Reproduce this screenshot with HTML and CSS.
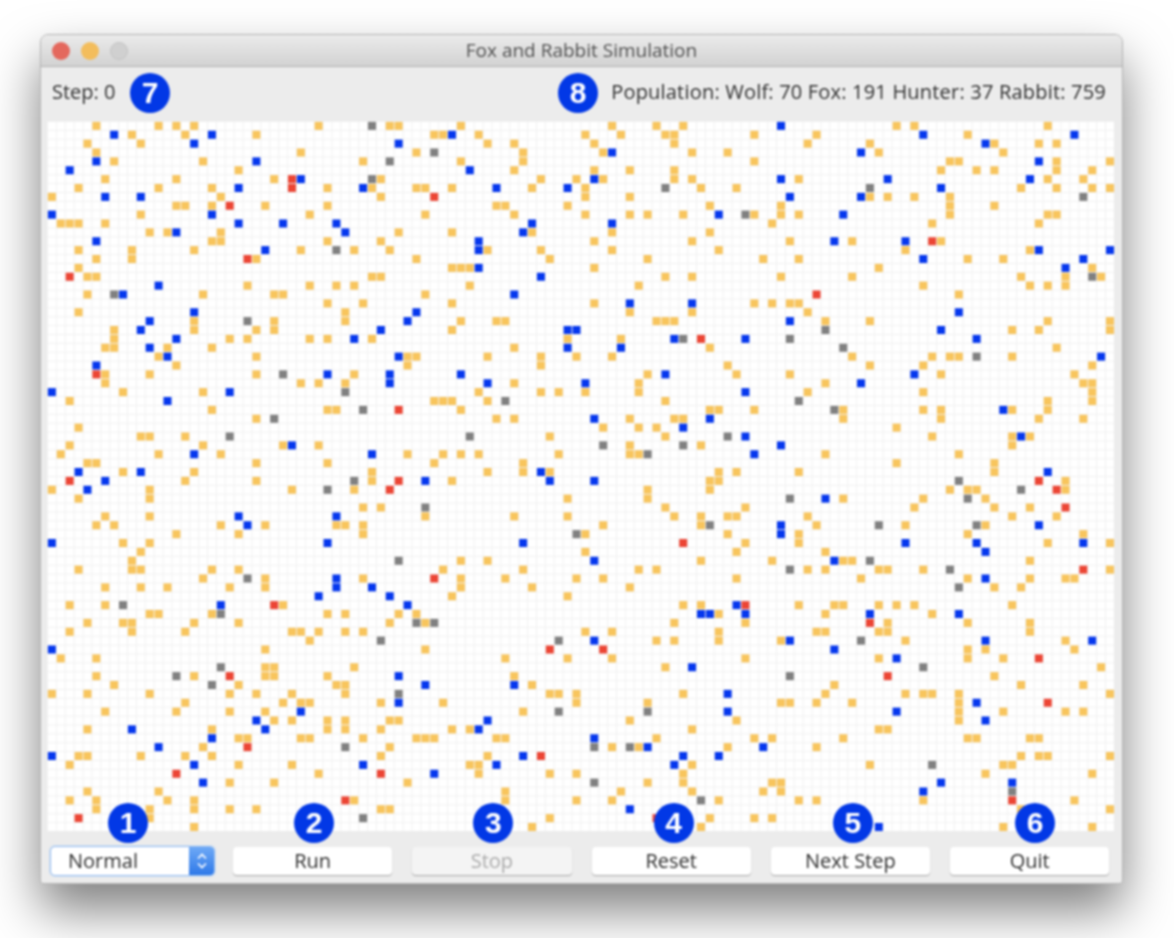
FILE: index.html
```html
<!DOCTYPE html>
<html lang="en">
<head>
    <meta charset="UTF-8">
    <title>Fox and Rabbit Simulation</title>
    <link rel="stylesheet" href="styles.css">
</head>
<body>
    <div class="window">
        <div class="titlebar">
            <span class="light red"></span>
            <span class="light yellow"></span>
            <span class="light off"></span>
            <span class="title">Fox and Rabbit Simulation</span>
        </div>
        <div class="info">
            <div class="info-left">
                <span class="step">Step: 0</span>
                <span class="badge">7</span>
            </div>
            <div class="info-right">
                <span class="badge">8</span>
                <span class="population">Population: Wolf: 70 Fox: 191 Hunter: 37 Rabbit: 759</span>
            </div>
        </div>
        <svg class="field" id="field" viewBox="0 0 120 80" preserveAspectRatio="none"></svg>
        <div class="controls">
            <div class="ctrl ctrl-select">
                <div class="select">
                    <span class="select-value">Normal</span>
                    <span class="stepper">
                        <svg width="12" height="20" viewBox="0 0 12 20">
                            <path d="M2 7.5 L6 3.5 L10 7.5 M2 12.5 L6 16.5 L10 12.5" fill="none" stroke="#fff" stroke-width="1.6"/>
                        </svg>
                    </span>
                </div>
                <span class="badge badge-over n1">1</span>
            </div>
            <div class="ctrl">
                <button class="btn">Run</button>
                <span class="badge badge-over n2">2</span>
            </div>
            <div class="ctrl">
                <button class="btn" disabled>Stop</button>
                <span class="badge badge-over n3">3</span>
            </div>
            <div class="ctrl">
                <button class="btn">Reset</button>
                <span class="badge badge-over n4">4</span>
            </div>
            <div class="ctrl">
                <button class="btn">Next Step</button>
                <span class="badge badge-over n5">5</span>
            </div>
            <div class="ctrl">
                <button class="btn">Quit</button>
                <span class="badge badge-over n6">6</span>
            </div>
        </div>
    </div>
    <script src="grid.js"></script>
</body>
</html>
```
FILE: styles.css
```css
*{
    box-sizing: border-box;
}

html,body{
    height: 100%;
}

body{
    margin: 0;
    padding: 34px 0 0 40px;
    overflow: hidden;
    background-color: #fff;
    font-family: "Open Sans", "Liberation Sans", sans-serif;
    color: #2e2e2e;
}

.window{
    width: 1083px;
    height: 850px;
    display: flex;
    flex-direction: column;
    background-color: #ececec;
    border: 1px solid #b4b4b4;
    border-radius: 8px 8px 3px 3px;
    box-shadow: 0 26px 50px rgba(0, 0, 0, 0.5);
    filter: blur(0.8px);
}

.titlebar{
    height: 32px;
    flex: none;
    display: flex;
    align-items: center;
    gap: 11px;
    padding-left: 11px;
    position: relative;
    background-image: linear-gradient(#ebebeb, #d2d2d2);
    border-bottom: 1px solid #b2b2b2;
    border-radius: 7px 7px 0 0;
}

.light{
    width: 18px;
    height: 18px;
    border-radius: 50%;
}
.red{
    background-color: #e4685d;
}
.yellow{
    background-color: #f3bd5c;
}
.off{
    background-color: #d0d0d0;
    border: 1px solid #c4c4c4;
}

.title{
    position: absolute;
    left: 0;
    right: 0;
    padding-bottom: 2px;
    text-align: center;
    font-size: 19px;
    color: #4f4f4f;
}

.info{
    height: 54px;
    flex: none;
    display: flex;
    justify-content: space-between;
    align-items: center;
    padding: 0 16px 2px 11px;
    font-size: 20px;
}

.info-left,.info-right{
    display: flex;
    align-items: center;
}
.step{
    width: 78px;
    padding-bottom: 4px;
}
.info-right{
    gap: 13px;
}
.population{
    padding-bottom: 4px;
    letter-spacing: 0.2px;
}

.badge{
    width: 40px;
    height: 40px;
    display: flex;
    align-items: center;
    justify-content: center;
    border-radius: 50%;
    background-color: #0238e6;
    color: #fff;
    font-family: "Liberation Sans", sans-serif;
    font-weight: bold;
    font-size: 30px;
}

.field{
    width: 1067px;
    height: 710px;
    flex: none;
    margin-left: 6px;
    background-color: #fff;
    background-image: linear-gradient(90deg, #f1f1f1 1px, transparent 1px), linear-gradient(#f1f1f1 1px, transparent 1px);
    background-size: 8.892px 8.875px;
}

.controls{
    display: flex;
    gap: 20px;
    padding: 15px 0 0 9px;
}

.ctrl{
    position: relative;
    width: 159.25px;
}
.ctrl-select{
    width: 165px;
    margin-right: -2px;
}

.btn{
    width: 100%;
    height: 28px;
    margin-top: 1px;
    padding: 0 0 2px;
    display: block;
    border: none;
    border-radius: 4px;
    background-color: #fff;
    box-shadow: 0 1px 1px rgba(0, 0, 0, 0.3);
    font-family: inherit;
    font-size: 20px;
    color: #2e2e2e;
}
.btn:disabled{
    background-color: #f4f4f4;
    color: #aaa;
}

.select{
    height: 30px;
    display: flex;
    justify-content: space-between;
    background-color: #fff;
    border: 1px solid #8eb9f1;
    border-radius: 5px;
    box-shadow: 0 0 2px #a9ccf5;
    font-size: 20px;
    overflow: hidden;
}
.select-value{
    padding-left: 17px;
    line-height: 27px;
}
.stepper{
    width: 25px;
    display: flex;
    align-items: center;
    justify-content: center;
    background-image: linear-gradient(#6ea9f6, #2f79e8);
}

.badge-over{
    position: absolute;
    top: -43px;
}
.n1{
    left: 58px;
}
.n2{
    left: 61px;
}
.n3{
    left: 61px;
}
.n4{
    left: 62px;
}
.n5{
    left: 62px;
}
.n6{
    left: 65px;
}
```
FILE: grid.js
```js
// one string per row of the field: colour letter + column
var rows = [
    "O5 O12 O14 O16 O30 G36 O38 O39 O46 O63 O68 O71 B82 O95 O97 O112",
    "B7 O9 O15 B18 O23 O43 O44 B45 O48 O60 O64 O69 O70 O79 O86 B98 O103 B115",
    "O4 O10 B16 B39 O49 O52 O61 O70 O85 O92 B105 O106 O111 O113",
    "O5 O28 O41 G43 O53 O62 B63 O72 O76 B91 O93 O107",
    "B5 O7 O17 B23 O35 G38 O46 O53 O79 O101 O102 B111 O113 O119",
    "B2 O21 B47 O52 O61 O65 O70 O100 O104 O106 O113 O117",
    "O6 O14 O25 R27 B28 G36 O37 O55 O59 B61 O62 O70 O72 B82 O84 B94 B110 O112 O116",
    "O3 O12 O18 B21 R27 O31 B35 O36 O41 O42 O45 B50 O54 B58 O60 G69 O73 O77 G92 B100 O109 O113 O117 O119",
    "O0 B6 B10 O19 O37 R43 O60 O65 B83 B91 O92 O94 O97 O101 G116",
    "O14 O15 O18 R20 O24 O31 O50 O51 O58 O74 O82 O101 O106",
    "B0 O10 B18 O29 O42 O52 O60 O65 O67 O71 B75 G78 O79 O82 O84 B89 O101 O112 O113",
    "O1 O2 O3 O6 B21 B26 B32 B54 B63 O81 O99 O111",
    "O11 O13 B14 O19 B33 O39 O45 B53 O54 O63 O74",
    "B5 O18 O19 O31 O37 B48 O61 O72 O83 B88 O90 B96 R99 O100",
    "O3 O9 O16 B24 O28 G32 O34 O38 B48 O49 O55 O63 O75 O96 O110 B111 B119",
    "O5 O9 R22 O23 O41 O56 O67 O80 O84 B98 O103 O107 B116",
    "O3 O45 O46 O47 B48 O61 O93 B114 O117",
    "R2 O4 O5 O36 O37 B55 O69 O72 O82 O90 O109 O114 G117 O118",
    "B12 O22 O29 O32 O34 O47 O66 O98 O110 O112 O114",
    "O4 G7 B8 O17 O25 O26 O42 B52 R86 O102",
    "O31 O35 O45 O61 B65 B72 O79 O81 O83 O84",
    "O3 B16 O33 B41 O65 O72 O85 B102",
    "B11 O16 G22 O25 O33 B40 O46 O50 O51 O68 O69 O70 B83 O87 O92 O112 O119",
    "O7 B10 O16 O23 O25 B37 O45 B58 B59 G87 B100 O108 O111 O119",
    "O7 B14 O20 O22 O29 O31 B34 O36 O58 O64 B70 G71 R73 B78 G83 B104",
    "O6 O7 B11 O13 O18 O52 B58 B64 O74 G89 O113",
    "O12 B13 O23 B39 O40 O41 O49 O55 O59 O63 O90 O99 O101 O102 G104 O108 B118",
    "B5 O14 O40 O55 O76 O92 O98 O117",
    "R5 O6 O11 O23 G26 B31 O34 B38 B46 O67 B69 O77 O83 B97 O100 O115",
    "O6 O28 O30 O33 B38 B49 O52 B60 O66 O87 B91 O116 O117",
    "B0 O8 O17 B20 G33 O48 O55 O57 O60 O66 B78 O85 O98 O117",
    "O2 B13 O43 O44 O45 O49 G51 O69 G84 O112 O117",
    "O18 O31 O32 G35 R39 O46 O74 O75 O79 G88 O89 O98 O100 B107 O108 O112",
    "O23 G25 O50 O52 B61 O65 O70 O71 B74 O89 O100 O111 O116",
    "O3 O62 O66 O68 B71 O95",
    "O10 O11 O15 G20 G47 O56 O69 G76 B78 O99 O108 B109 O110",
    "O2 O17 O26 B27 O30 G62 O65 G71 O73 B82 O108",
    "O1 O12 B16 O19 B36 O40 O44 O46 O48 O57 O65 O66 G67 B79 O87 O102",
    "O4 O5 O23 O31 O43 O53 O95 O106",
    "B3 O8 B10 O16 O36 O49 O53 B55 O56 O75 O77 O84 O106 B112",
    "R2 B6 O15 O23 G34 O36 R39 B42 O45 B56 B61 O74 O75 G102 R111 O114",
    "O0 B4 O11 O27 G31 O34 R38 O67 O74 O101 O103 O104 G109 R113 O114",
    "O3 O11 O58 O67 G83 B87 O89 O98 G103 O105",
    "O35 O37 G42 O69 O78 O97 O106 O110 R114",
    "O6 O11 B21 B32 O42 O52 O58 O70 O73 O76 O77 O85 O108 O113",
    "O5 O7 O19 B22 O24 O32 O33 O35 O62 O73 G74 B82 O86 G93 O96 G104 O105 B111",
    "O14 O21 O35 G59 O60 O76 B82 O84 O103 O116",
    "B0 O8 O11 B31 B53 R71 O78 O84 B96 B104 O112 B116 O119",
    "O10 O60 O77 O87 B105",
    "O9 G39 O46 O49 B61 O73 O81 B88 O89 O90 G92 O110",
    "O3 O9 O10 O18 O21 O44 O53 O66 O68 G83 O85 O87 O93 O94 O98 G101 R116 O119",
    "O17 G22 O24 B32 O35 R43 O46 O51 O59 O62 O77 O91 O103 B105 O110 O114 O115",
    "O6 O10 O13 O20 O24 B32 B36 O46 O54 O65 G102 O106 O109",
    "B30 B38 O45 O58",
    "O2 O6 G8 B19 R25 O26 B40 O71 O73 B77 R78 O84 O88 O89 O93 O95 O97 O108",
    "O11 O12 O18 G19 O31 O33 O39 O41 B73 B74 O75 B78 O87 B92 O99 B102",
    "O4 O8 O9 O16 O21 O38 G41 O42 G43 O70 O78 R92 O94 O103 O110",
    "O2 O9 O15 O27 O28 O30 O33 O35 O60 O63 O75 O86 O87 O93 O94 O110",
    "O29 G37 G57 B61 O68 O70 O75 O82 B83 G91 O96 B105 O114 B117",
    "B0 O24 O42 R56 R62 B88 O103 O105 O115",
    "O1 O5 O51 O58 O63 O78 O93 B95 O103 O107 R111",
    "G19 O24 O25 O34 O69 B72 G98 O118",
    "O5 G14 O16 R20 O24 O25 O31 B39 O52 G83 R94 O106",
    "O7 G18 O21 O32 O33 B42 B52 O54 O88 O109 O116",
    "O0 O4 O11 O20 O23 O27 O33 G39 O56 O57 O59 O71 B76 O87 O96 O98 O99 O102 O119",
    "O15 O26 O28 O29 O37 B39 O44 O59 O67 O82 O83 O86 O90 O102 B104 R112",
    "O6 O14 O20 O24 B28 O53 G57 G67 B76 B95 O102 O107 O114 O116",
    "B23 O25 O27 O31 O33 O38 O39 B49 O65 O77 O102 B105",
    "O4 B9 O18 B24 O31 O33 O37 O45 O47 B48 O72 O93 O94",
    "B18 O21 O22 O28 O29 O35 O41 O42 O43 O50 O51 B61 O68 O79 O81 O89 O103 O104 O110 O111",
    "B12 O17 R22 G33 O38 G61 O63 G65 O66 B67 O76 B80 O86",
    "B0 O3 O4 O10 O15 O18 O37 O49 B53 R55 B71 B75 O109 O111 O112 O119",
    "O2 B16 O21 O27 B35 O47 O48 B50 B70 O72 O92 G99 O107 O108",
    "R14 O30 R37 B43 O48 O56 O59 O71 O105 O117",
    "B17 O20 O25 O40 G61 O67 O71 O81 O82 B100 B108",
    "O4 O12 O51 O64 O72 O80 O82 B98 G108",
    "O2 O5 O13 O16 R33 O34 O51 O59 O63 G73 O75 O84 O86 O98 R108 O115",
    "O5 O11 O16 O20 O23 O37 O38 B65 O109 O119",
    "R3 O11 G35 O56 R68 O74 O79 O81",
    "O16 O54 O73 B93 O107 O117"
];

var colours = { O: "#f8c55d", B: "#0537ee", R: "#ec4534", G: "#808080" };
var field = document.getElementById("field");

rows.forEach(function (row, y) {
    row.split(" ").forEach(function (cell) {
        var r = document.createElementNS("http://www.w3.org/2000/svg", "rect");
        r.setAttribute("x", parseInt(cell.slice(1)) + 0.1);
        r.setAttribute("y", y + 0.1);
        r.setAttribute("width", 0.9);
        r.setAttribute("height", 0.9);
        r.setAttribute("fill", colours[cell[0]]);
        field.appendChild(r);
    });
});
```
